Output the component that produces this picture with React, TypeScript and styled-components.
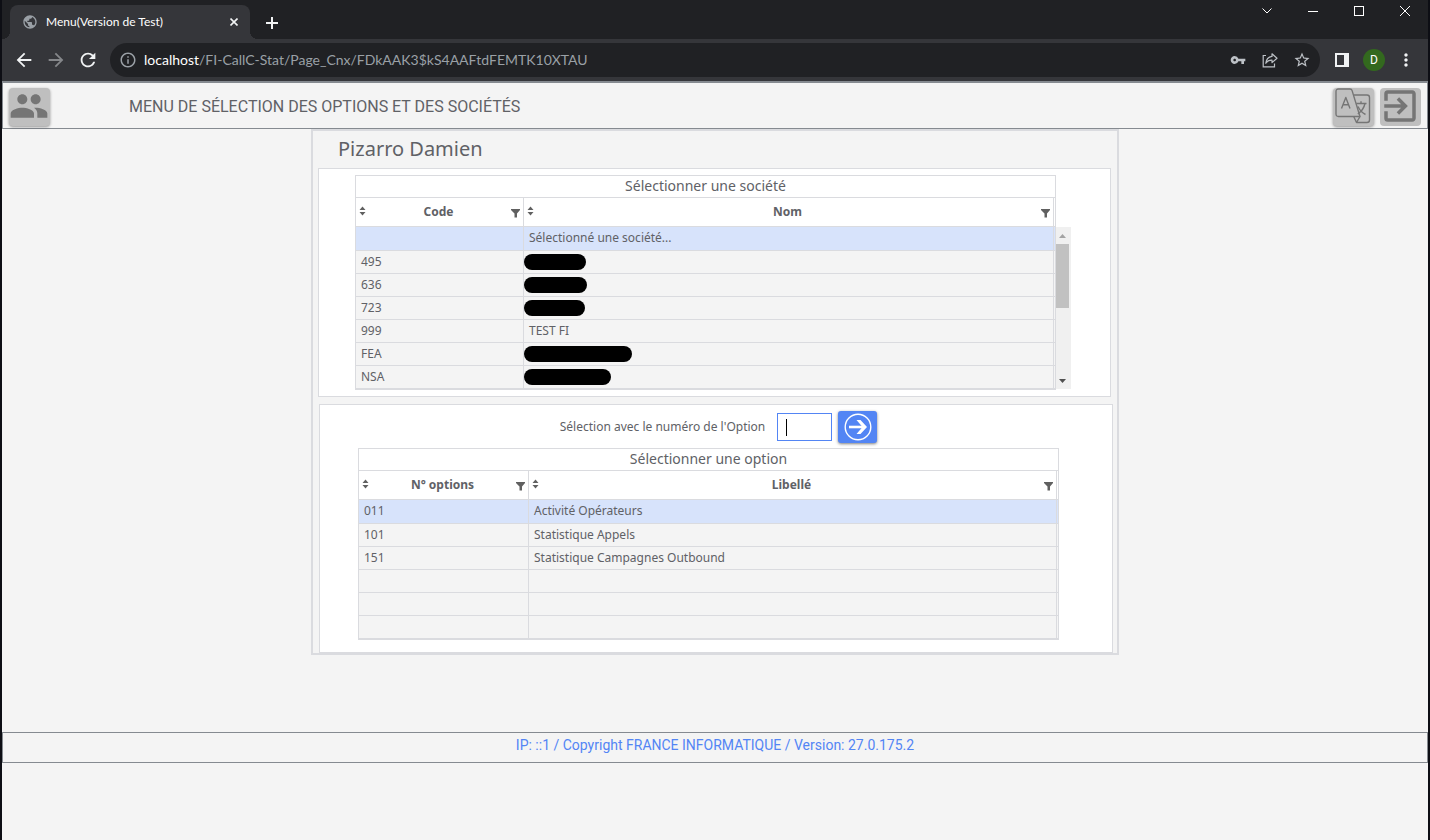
import React from "react";
import styled, { createGlobalStyle } from "styled-components";
import {
  MdArrowBack,
  MdArrowForward,
  MdExitToApp,
  MdInfoOutline,
  MdMoreVert,
  MdPeople,
  MdPublic,
  MdRefresh,
  MdStarBorder,
  MdVpnKey,
} from "react-icons/md";

const color = {
  strip: "#202124",
  toolbar: "#35363a",
  page: "#f4f4f4",
  line: "#dadbdf",
  frame: "#858a90",
  text: "#606166",
  blue: "#5385f4",
  selected: "#d7e3fb",
  button: "#bfbfbf",
  glyph: "#757575",
};

const uiFont = `"Noto Sans", "Open Sans", sans-serif`;
const chromeFont = `Lato, "Open Sans", sans-serif`;

const GlobalStyle = createGlobalStyle`
  *, *::before, *::after { box-sizing: border-box; }
  body { margin: 0; background: ${color.page}; color: ${color.text}; font-family: ${uiFont}; }
  button { font: inherit; border: 0; padding: 0; background: none; color: inherit; cursor: pointer; }
  svg { display: block; flex: none; }
`;

const Window = styled.div`
  min-height: 100vh;
  border: solid #0d0e14;
  border-width: 0 2px;
  background: ${color.page};
`;

/* Browser chrome */

const TabStrip = styled.div`
  display: flex;
  align-items: flex-end;
  height: 39px;
  padding-left: 8px;
  background: ${color.strip};
  color: #fff;
`;

const Tab = styled.div`
  position: relative;
  display: flex;
  align-items: center;
  gap: 8px;
  width: 240px;
  height: 34px;
  padding: 0 8px 0 12px;
  border-radius: 8px 8px 0 0;
  background: ${color.toolbar};
  font: 12px/16px ${chromeFont};

  &::before,
  &::after {
    content: "";
    position: absolute;
    bottom: 0;
    width: 8px;
    height: 8px;
  }
  &::before {
    right: 100%;
    background: radial-gradient(circle at 0 0, transparent 8px, ${color.toolbar} 8px);
  }
  &::after {
    left: 100%;
    background: radial-gradient(circle at 100% 0, transparent 8px, ${color.toolbar} 8px);
  }
`;

const TabTitle = styled.span`
  flex: 1;
  white-space: nowrap;
`;

const ChromeButton = styled.button<{ $size?: number; $tint?: string }>`
  display: flex;
  flex: none;
  align-items: center;
  justify-content: center;
  width: ${(p) => p.$size ?? 32}px;
  height: ${(p) => p.$size ?? 32}px;
  color: ${(p) => p.$tint ?? "#f1f3f4"};
`;

const NewTab = styled(ChromeButton)`
  margin-left: 6px;
`;

const WindowControls = styled.div`
  display: flex;
  align-self: flex-start;
  margin-left: auto;
`;

const WindowButton = styled.button`
  display: flex;
  align-items: center;
  justify-content: center;
  width: 46px;
  height: 22px;
`;

const Toolbar = styled.div`
  display: flex;
  align-items: center;
  height: 42px;
  padding: 0 6px;
  background: ${color.toolbar};
`;

const AddressBar = styled.div`
  display: flex;
  flex: 1;
  align-items: center;
  min-width: 0;
  height: 34px;
  margin: 0 6px;
  padding: 0 2px;
  border-radius: 17px;
  background: ${color.strip};
`;

const Url = styled.div`
  flex: 1;
  min-width: 0;
  overflow: hidden;
  color: #9aa0a6;
  font: 14px/20px ${chromeFont};
  white-space: nowrap;

  span {
    color: #fff;
  }
`;

const Avatar = styled.span`
  display: flex;
  align-items: center;
  justify-content: center;
  width: 22px;
  height: 22px;
  border-radius: 50%;
  background: #33691e;
  color: #fff;
  font: 12px/16px Roboto, sans-serif;
`;

/* Application */

const AppHeader = styled.header`
  display: flex;
  align-items: center;
  gap: 6px;
  height: 48px;
  padding: 3px 6px 0;
  border: 1px solid ${color.frame};
  border-top-width: 2px;
`;

const AppTitle = styled.h1`
  flex: 1;
  margin: 0 0 0 73px;
  font: 400 16px/20px Roboto, sans-serif;
`;

const RaisedButton = styled.button<{ $flat?: boolean }>`
  display: flex;
  align-items: center;
  justify-content: center;
  width: 41px;
  height: 38px;
  padding: 0 1px 2px 0;
  border-radius: 4px;
  background: ${color.button};
  color: ${color.glyph};
  box-shadow: ${(p) => (p.$flat ? "none" : "0 1px 3px rgba(0, 0, 0, 0.4)")};
`;

const Card = styled.main`
  width: 100%;
  max-width: 808px;
  margin: 0 auto;
  border: 2px solid ${color.line};
`;

const UserName = styled.h2`
  margin: 0;
  padding: 4px 25px 6px;
  font-size: 20px;
  font-weight: 400;
  line-height: 27px;
`;

const CompanyPanel = styled.section`
  margin: 0 6px 7px 5px;
  padding: 6px 54px 6px 36px;
  border: 1px solid ${color.line};
  background: #fff;
`;

const OptionPanel = styled.section`
  margin: 0 4px 0 6px;
  padding: 6px 53px 12px 38px;
  border: 1px solid ${color.line};
  background: #fff;
`;

const ScrollArea = styled.div`
  display: flex;
  align-items: flex-end;
`;

const TableFrame = styled.div`
  flex: 1;
  border: solid ${color.line};
  border-width: 1px 0 1px 1px;
`;

const Table = styled.table`
  width: 100%;
  table-layout: fixed;
  border-collapse: separate;
  border-spacing: 0;
`;

const Caption = styled.caption`
  height: 22px;
  border: solid ${color.line};
  border-width: 0 1px 1px 0;
  font-size: 14px;
  line-height: 20px;
`;

const HeadCell = styled.th<{ $width?: number }>`
  width: ${(p) => (p.$width ? `${p.$width}px` : "auto")};
  height: 29px;
  padding: 0 3px;
  border-right: 1px solid ${color.line};
  border-bottom: 1px solid ${color.line};
  font-size: 12px;
  line-height: 16px;

  &:last-child {
    border-right: 3px double ${color.line};
  }
`;

const HeadContent = styled.div`
  display: flex;
  align-items: center;
  justify-content: space-between;
`;

const Row = styled.tr<{ $selected?: boolean }>`
  height: ${(p) => (p.$selected ? 24 : 23)}px;
  background: ${(p) => (p.$selected ? color.selected : color.page)};
`;

const Cell = styled.td`
  padding: 0 5px 1px;
  border-right: 1px solid ${color.line};
  border-bottom: 1px solid ${color.line};
  font-size: 12px;
  line-height: 16px;

  &:last-child {
    border-right: 3px double ${color.line};
  }
`;

const RedactedCell = styled(Cell)`
  padding: 0;
`;

const Redaction = styled.span<{ $width: number }>`
  display: block;
  width: ${(p) => p.$width}px;
  height: 16px;
  border-radius: 8px;
  background: #000;
`;

const ScrollTrack = styled.div`
  display: flex;
  flex-direction: column;
  width: 15px;
  height: 162px;
  margin: 0 -15px 1px 0;
  background: #f0f0f0;
`;

const ScrollButton = styled.button`
  display: flex;
  align-items: center;
  justify-content: center;
  width: 13px;
  height: 17px;
`;

const ScrollThumb = styled.div`
  width: 13px;
  height: 64px;
  margin-bottom: auto;
  background: #c1c1c1;
`;

const OptionForm = styled.form`
  display: flex;
  align-items: center;
  justify-content: center;
  gap: 6px;
  margin: 0 0 5px 20px;
`;

const OptionLabel = styled.label`
  margin-right: 6px;
  font-size: 12px;
  line-height: 16px;
`;

const OptionField = styled.div`
  position: relative;
  width: 55px;
  height: 28px;

  &::after {
    content: "";
    position: absolute;
    top: 6px;
    left: 9px;
    width: 1px;
    height: 17px;
    background: #000;
  }
`;

const OptionInput = styled.input`
  width: 100%;
  height: 100%;
  padding: 0 8px;
  border: 1px solid ${color.blue};
  outline: 0;
  background: #fff;
  font: 12px/16px ${uiFont};
  caret-color: transparent;
`;

const GoButton = styled.button`
  display: flex;
  align-items: center;
  justify-content: center;
  width: 39px;
  height: 32px;
  border-radius: 3px;
  background: ${color.blue};
  color: #fff;
  box-shadow: 0 1px 3px rgba(0, 0, 0, 0.5);
`;

const Footer = styled.footer`
  height: 31px;
  margin-top: 77px;
  padding-top: 2px;
  border: 1px solid ${color.frame};
  color: ${color.blue};
  font: 14px/20px Roboto, sans-serif;
  text-align: center;
`;

const SortIcon = () => (
  <svg width="7" height="12" viewBox="0 0 7 12" fill="#606060">
    <path d="M3.5 0.5 6.5 4H0.5ZM3.5 9.5 0.5 6H6.5Z" />
  </svg>
);

const FilterIcon = () => (
  <svg width="9" height="12" viewBox="0 0 9 12" fill="#606060">
    <path d="M0 3H9V4L6 7.5V11.5H3.5V7.5L0 4Z" />
  </svg>
);

const ShareIcon = () => (
  <svg width="16" height="16" viewBox="0 0 16 16" fill="none" stroke="#bdc1c6" strokeWidth="1.2">
    <path d="M4 3.5H1.2V14.8H12.5V11.5" />
    <path d="M10 1.8 15 6.2 10 10.6V8.1C7.3 8 5.3 8.8 3.8 11.3 4.2 7.6 6.2 4.9 10 4.4Z" strokeLinejoin="round" />
  </svg>
);

const TranslateIcon = () => (
  <svg width="36" height="36" viewBox="0 0 36 36" fill="none" stroke="currentColor" strokeWidth="1.4" strokeLinejoin="round">
    <path d="M3.5 1H15Q16.6 1 17.1 2.6L25 28.5H3.5Q1 28.5 1 26V3.5Q1 1 3.5 1Z" />
    <path d="M19 7H32Q34.5 7 34.5 9.5V32Q34.5 34.5 32 34.5H21.5L18.7 28.5M25 28.5 21.5 34.5" />
    <path d="M6.5 20.5 10.8 9.5 15 20.5M8 16.8H13.6" />
    <path d="M21.3 15.5H31.5M26 13.2V15.5M30 15.5C29 20 26.5 23.5 22.8 26M23 18.5C24.6 22 27.5 25 30.5 26.5" />
  </svg>
);

const CircleArrowIcon = () => (
  <svg width="28" height="28" viewBox="0 0 28 28" fill="none" stroke="currentColor">
    <circle cx="14" cy="14" r="12.8" strokeWidth="1.4" />
    <path d="M5 14H20" strokeWidth="2.6" />
    <path d="M12.5 7H16.5L23 14 16.5 21H12.5L18.5 14Z" fill="currentColor" stroke="none" />
  </svg>
);

function ColumnHeader({ label, width }: { label: string; width?: number }) {
  return (
    <HeadCell $width={width} scope="col">
      <HeadContent>
        <button type="button" aria-label={`Trier ${label}`}>
          <SortIcon />
        </button>
        {label}
        <button type="button" aria-label={`Filtrer ${label}`}>
          <FilterIcon />
        </button>
      </HeadContent>
    </HeadCell>
  );
}

type DataRow = { code: string; name?: string; redacted?: number };

type DataTableProps = {
  title: string;
  columns: [string, string];
  firstWidth: number;
  rows: DataRow[];
};

function DataTable({ title, columns, firstWidth, rows }: DataTableProps) {
  return (
    <TableFrame>
      <Table>
        <Caption>{title}</Caption>
        <thead>
          <tr>
            <ColumnHeader label={columns[0]} width={firstWidth} />
            <ColumnHeader label={columns[1]} />
          </tr>
        </thead>
        <tbody>
          {rows.map((row, i) => (
            <Row key={i} $selected={i === 0}>
              <Cell>{row.code}</Cell>
              {row.redacted ? (
                <RedactedCell>
                  <Redaction $width={row.redacted} />
                </RedactedCell>
              ) : (
                <Cell>{row.name}</Cell>
              )}
            </Row>
          ))}
        </tbody>
      </Table>
    </TableFrame>
  );
}

const companies: DataRow[] = [
  { code: "", name: "Sélectionné une société..." },
  { code: "495", redacted: 62 },
  { code: "636", redacted: 63 },
  { code: "723", redacted: 61 },
  { code: "999", name: "TEST FI" },
  { code: "FEA", redacted: 108 },
  { code: "NSA", redacted: 87 },
];

const options: DataRow[] = [
  { code: "011", name: "Activité Opérateurs" },
  { code: "101", name: "Statistique Appels" },
  { code: "151", name: "Statistique Campagnes Outbound" },
  { code: "" },
  { code: "" },
  { code: "" },
];

export default function App() {
  return (
    <Window>
      <GlobalStyle />
      <TabStrip>
        <Tab>
          <MdPublic size={16} color="#9aa0a6" />
          <TabTitle>Menu(Version de Test)</TabTitle>
          <ChromeButton $size={16} aria-label="Fermer l'onglet">
            <svg width="8" height="8" viewBox="0 0 8 8" stroke="currentColor" strokeWidth="1.6">
              <path d="M.5.5 7.5 7.5M7.5.5.5 7.5" />
            </svg>
          </ChromeButton>
        </Tab>
        <NewTab aria-label="Nouvel onglet">
          <svg width="12" height="12" viewBox="0 0 12 12" stroke="currentColor" strokeWidth="2">
            <path d="M6 0V12M0 6H12" />
          </svg>
        </NewTab>
        <WindowControls>
          <WindowButton aria-label="Onglets">
            <svg width="10" height="6" viewBox="0 0 10 6" fill="none" stroke="#fff">
              <path d="M.5.5 5 5 9.5.5" />
            </svg>
          </WindowButton>
          <WindowButton aria-label="Réduire">
            <svg width="10" height="2" viewBox="0 0 10 2" fill="#fff">
              <path d="M0 1H10V2H0Z" />
            </svg>
          </WindowButton>
          <WindowButton aria-label="Agrandir">
            <svg width="10" height="10" viewBox="0 0 10 10" fill="none" stroke="#fff">
              <rect x=".5" y=".5" width="9" height="9" />
            </svg>
          </WindowButton>
          <WindowButton aria-label="Fermer">
            <svg width="10" height="10" viewBox="0 0 10 10" stroke="#fff">
              <path d="M0 0 10 10M10 0 0 10" />
            </svg>
          </WindowButton>
        </WindowControls>
      </TabStrip>
      <Toolbar>
        <ChromeButton aria-label="Précédent">
          <MdArrowBack size={22} />
        </ChromeButton>
        <ChromeButton $tint="#85878a" aria-label="Suivant">
          <MdArrowForward size={22} />
        </ChromeButton>
        <ChromeButton aria-label="Actualiser">
          <MdRefresh size={22} />
        </ChromeButton>
        <AddressBar>
          <ChromeButton $tint="#9aa0a6" aria-label="Informations du site">
            <MdInfoOutline size={18} />
          </ChromeButton>
          <Url>
            <span>localhost</span>/FI-CallC-Stat/Page_Cnx/FDkAAK3$kS4AAFtdFEMTK10XTAU
          </Url>
          <ChromeButton $tint="#bdc1c6" aria-label="Mots de passe">
            <MdVpnKey size={16} />
          </ChromeButton>
          <ChromeButton aria-label="Partager">
            <ShareIcon />
          </ChromeButton>
          <ChromeButton $tint="#bdc1c6" aria-label="Favori">
            <MdStarBorder size={18} />
          </ChromeButton>
        </AddressBar>
        <ChromeButton aria-label="Panneau latéral">
          <svg width="14" height="14" viewBox="0 0 14 14" fill="currentColor">
            <path d="M0 0H14V14H0ZM2 2V12H9V2Z" fillRule="evenodd" />
          </svg>
        </ChromeButton>
        <ChromeButton aria-label="Profil">
          <Avatar>D</Avatar>
        </ChromeButton>
        <ChromeButton aria-label="Menu">
          <MdMoreVert size={20} />
        </ChromeButton>
      </Toolbar>

      <AppHeader>
        <RaisedButton aria-label="Utilisateurs">
          <MdPeople size={40} />
        </RaisedButton>
        <AppTitle>MENU DE SÉLECTION DES OPTIONS ET DES SOCIÉTÉS</AppTitle>
        <RaisedButton aria-label="Langue">
          <TranslateIcon />
        </RaisedButton>
        <RaisedButton $flat aria-label="Quitter">
          <MdExitToApp size={42} />
        </RaisedButton>
      </AppHeader>

      <Card>
        <UserName>Pizarro Damien</UserName>
        <CompanyPanel>
          <ScrollArea>
            <DataTable
              title="Sélectionner une société"
              columns={["Code", "Nom"]}
              firstWidth={168}
              rows={companies}
            />
            <ScrollTrack>
              <ScrollButton aria-label="Défiler vers le haut">
                <svg width="7" height="4" viewBox="0 0 7 4" fill="#a3a3a3">
                  <path d="M0 4 3.5 0 7 4Z" />
                </svg>
              </ScrollButton>
              <ScrollThumb />
              <ScrollButton aria-label="Défiler vers le bas">
                <svg width="7" height="4" viewBox="0 0 7 4" fill="#505050">
                  <path d="M0 0 3.5 4 7 0Z" />
                </svg>
              </ScrollButton>
            </ScrollTrack>
          </ScrollArea>
        </CompanyPanel>
        <OptionPanel>
          <OptionForm onSubmit={(e) => e.preventDefault()}>
            <OptionLabel htmlFor="option">Sélection avec le numéro de l'Option</OptionLabel>
            <OptionField>
              <OptionInput id="option" type="text" />
            </OptionField>
            <GoButton aria-label="Valider">
              <CircleArrowIcon />
            </GoButton>
          </OptionForm>
          <DataTable
            title="Sélectionner une option"
            columns={["N° options", "Libellé"]}
            firstWidth={170}
            rows={options}
          />
        </OptionPanel>
      </Card>

      <Footer>IP: ::1 / Copyright FRANCE INFORMATIQUE / Version: 27.0.175.2</Footer>
    </Window>
  );
}
